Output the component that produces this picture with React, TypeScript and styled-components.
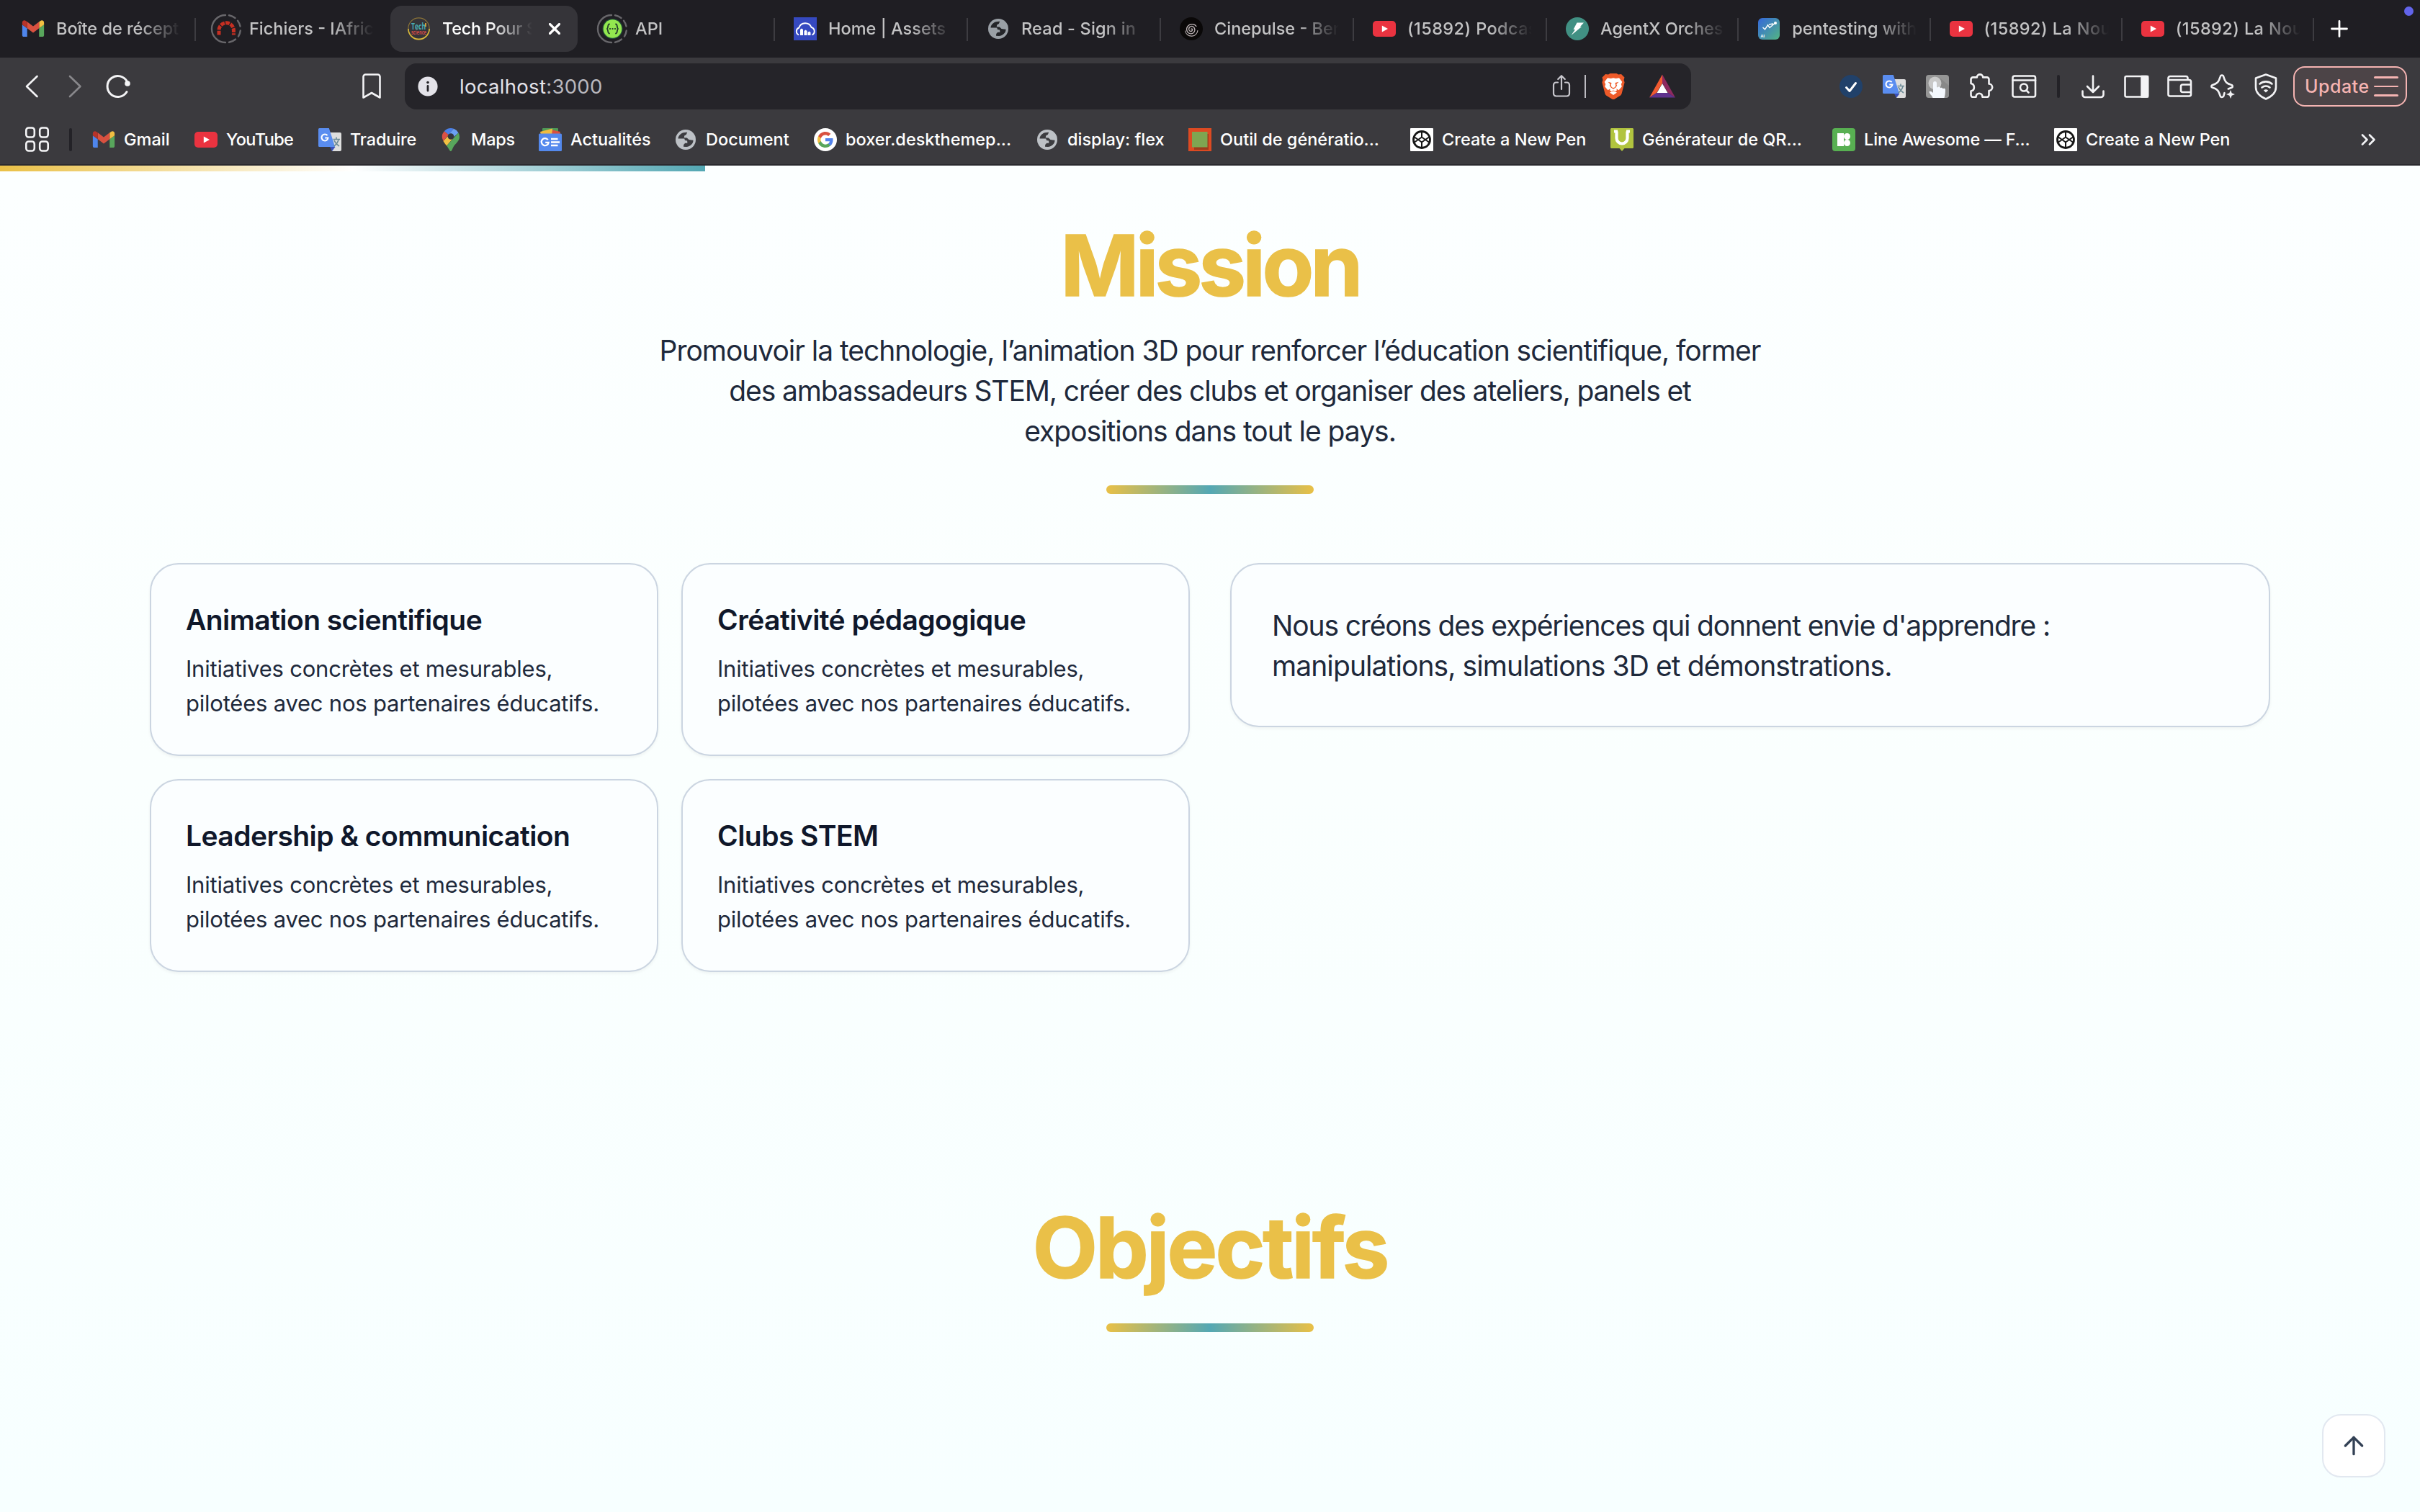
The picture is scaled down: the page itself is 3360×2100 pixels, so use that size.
import React from "react";
import styled, { createGlobalStyle } from "styled-components";
import { ArrowUp } from "lucide-react";

const GlobalStyle = createGlobalStyle`
  * { box-sizing: border-box; }
  body {
    margin: 0;
    background: #fbffff;
    font-family: Inter, "Liberation Sans", "Noto Sans CJK SC", sans-serif;
    -webkit-font-smoothing: antialiased;
  }
  h2, h3, p { margin: 0; }
`;

const Window = styled.div`
  width: 3360px;
  height: 2100px;
  display: flex;
  flex-direction: column;
  overflow: hidden;
`;

/* ---------- Tab strip ---------- */

const TabStrip = styled.div`
  position: relative;
  display: flex;
  flex: none;
  align-items: center;
  height: 80px;
  padding-left: 4px;
  background: #1f1e23;
`;

const TabSlot = styled.div<{ $width: number }>`
  display: flex;
  flex: none;
  align-items: center;
  width: ${(p) => p.$width}px;
  height: 80px;
`;

const TabBody = styled.div<{ $active?: boolean }>`
  display: flex;
  align-items: center;
  width: 260px;
  height: 64px;
  margin-left: 2px;
  padding-left: 24px;
  border-radius: 16px;
  background: ${(p) => (p.$active ? "#353439" : "transparent")};
`;

const TabLabel = styled.span<{ $active?: boolean; $tracking?: number }>`
  flex: none;
  width: ${(p) => (p.$active ? 125 : 173)}px;
  margin-left: 16px;
  white-space: nowrap;
  font-size: 23.5px;
  line-height: 32px;
  font-weight: ${(p) => (p.$active ? 500 : 450)};
  letter-spacing: ${(p) => p.$tracking ?? 0}px;
  color: ${(p) => (p.$active ? "#ffffff" : "#c3c3c4")};
  mask-image: linear-gradient(to right, #000 calc(100% - 58px), transparent 100%);
`;

const TabSeparator = styled.span`
  width: 2px;
  height: 32px;
  margin-left: auto;
  margin-top: 2px;
  background: #3d3c41;
`;

const CloseIcon = styled.svg`
  width: 16px;
  height: 16px;
  margin-left: 23px;
`;

const NewTab = styled.svg`
  width: 24px;
  height: 24px;
  margin-left: 23px;
`;

const RecordingDot = styled.span`
  position: absolute;
  top: 9px;
  right: 9px;
  width: 13px;
  height: 13px;
  border-radius: 50%;
  background: #6264ea;
`;

/* ---------- Toolbar ---------- */

const Toolbar = styled.div`
  display: flex;
  flex: none;
  align-items: center;
  height: 80px;
  padding-left: 30px;
  background: #3b3a3e;
`;

const Glyph = styled.svg`
  flex: none;
  display: block;
  width: 32px;
  height: 32px;
  overflow: visible;
  fill: none;
  stroke: #f3f3f5;
  stroke-width: 2.6;
  stroke-linecap: round;
  stroke-linejoin: round;
`;

const Navigation = styled.div`
  display: flex;
  align-items: center;
  gap: 26px;
  width: 470px;
`;

const AddressBar = styled.div`
  display: flex;
  align-items: center;
  width: 1786px;
  height: 64px;
  margin-left: 30px;
  padding: 0 24px 0 16px;
  border-radius: 16px;
  background: #252429;
`;

const Address = styled.span`
  flex: 1;
  margin-left: 28px;
  font-size: 27.5px;
  line-height: 40px;
  letter-spacing: 0.3px;
  color: #e4e3e9;
`;

const Port = styled.span`
  color: #b9b8be;
`;

const AddressDivider = styled.span`
  width: 2px;
  height: 32px;
  margin: 0 22px 0 16px;
  background: #bdbcc2;
`;

const IconGroup = styled.div<{ $before: number }>`
  display: flex;
  align-items: center;
  gap: 28px;
  margin-left: ${(p) => p.$before}px;
`;

const BarDivider = styled.span<{ $before: number; $after?: number }>`
  width: 4px;
  height: 32px;
  margin: 0 ${(p) => p.$after ?? 0}px 0 ${(p) => p.$before}px;
  border-radius: 2px;
  background: #232227;
`;

const UpdateButton = styled.button`
  display: flex;
  align-items: center;
  justify-content: space-between;
  width: 158px;
  height: 56px;
  margin: 0 0 0 22px;
  padding: 0 10px 0 14px;
  border: 2px solid #f5b4b2;
  border-radius: 16px;
  background: #4c4447;
  color: #f5b4b2;
  font: 500 25px/36px Inter, sans-serif;
  letter-spacing: 0.5px;
`;

const MenuLines = styled.span`
  display: flex;
  flex-direction: column;
  gap: 10px;
  width: 34px;
`;

const MenuLine = styled.span`
  height: 2.6px;
  border-radius: 2px;
  background: #f5b4b2;
`;

/* ---------- Bookmarks ---------- */

const BookmarksBar = styled.div`
  display: flex;
  flex: none;
  align-items: center;
  height: 70px;
  padding-left: 36px;
  border-bottom: 2px solid #2b2a2f;
  background: #3b3a3e;
`;

const Bookmark = styled.div<{ $width: number }>`
  display: flex;
  flex: none;
  align-items: center;
  gap: 12px;
  width: ${(p) => p.$width}px;
`;

const BookmarkLabel = styled.span<{ $tracking?: number }>`
  white-space: nowrap;
  font-size: 23.5px;
  line-height: 32px;
  font-weight: 500;
  letter-spacing: ${(p) => p.$tracking ?? 0}px;
  color: #ffffff;
`;

const Overflow = styled.svg`
  width: 22px;
  height: 16px;
  margin-left: auto;
  margin-right: 61px;
`;

/* ---------- Page ---------- */

const Page = styled.main`
  display: flex;
  flex: 1;
  flex-direction: column;
  align-items: center;
  background: linear-gradient(to bottom, #fcffff 0%, #fafffe 45%, #f7ffff 100%);
`;

const ScrollProgress = styled.div`
  align-self: flex-start;
  flex: none;
  width: 979px;
  height: 8px;
  background: linear-gradient(to right, #eac046, #ffffff 50%, #53a7b3);
`;

const SectionHeader = styled.header<{ $before: number }>`
  display: flex;
  flex-direction: column;
  align-items: center;
  padding-top: ${(p) => p.$before}px;
`;

const Heading = styled.h2<{ $tracking: number }>`
  font-size: 117px;
  line-height: 120px;
  font-weight: 700;
  letter-spacing: ${(p) => p.$tracking}px;
  color: #eac048;
  -webkit-text-stroke: 1.6px #eac048;
`;

const Lead = styled.p`
  display: flex;
  flex-direction: column;
  align-items: center;
  padding-top: 30px;
`;

const TextLine = styled.span<{ $tracking: number }>`
  display: block;
  white-space: nowrap;
  font-size: 39px;
  line-height: 56px;
  letter-spacing: ${(p) => p.$tracking}px;
  color: #1e293b;
`;

const Accent = styled.div<{ $before: number }>`
  width: 288px;
  height: 12px;
  margin-top: ${(p) => p.$before}px;
  border-radius: 6px;
  background: linear-gradient(to right, #e9c046, #54a8b4 50%, #e9c046);
`;

const Columns = styled.div`
  display: grid;
  grid-template-columns: 1fr 1fr;
  align-items: start;
  gap: 56px;
  width: 2944px;
  margin-top: 96px;
`;

const CardGrid = styled.div`
  display: grid;
  grid-template-columns: 1fr 1fr;
  gap: 32px;
`;

const Card = styled.article<{ $padding: number }>`
  padding: ${(p) => p.$padding + 1}px ${(p) => p.$padding}px ${(p) => p.$padding - 1}px;
  border: 2px solid #cbd5e1;
  border-radius: 40px;
  background: #fbfeff;
  box-shadow: 0 2px 4px rgba(0, 0, 0, 0.05);
`;

const CardTitle = styled.h3`
  font-size: 39px;
  line-height: 56px;
  font-weight: 600;
  letter-spacing: -0.56px;
  white-space: nowrap;
  color: #0f172a;
`;

const CardText = styled.p`
  width: 600px;
  margin-top: 16px;
  font-size: 31px;
  line-height: 48px;
  letter-spacing: -0.22px;
  color: #1e293b;
`;

const BackToTop = styled.button`
  position: fixed;
  right: 48px;
  bottom: 48px;
  display: flex;
  align-items: center;
  justify-content: center;
  width: 88px;
  height: 88px;
  padding: 0;
  border: 2px solid #e2e8f0;
  border-radius: 26px;
  background: #ffffff;
  color: #334155;
`;

/* ---------- Site icons ---------- */

const Favicon = styled.svg`
  flex: none;
  display: block;
  width: 32px;
  height: 32px;
  overflow: visible;
`;

const GmailIcon = () => (
  <Favicon viewBox="49.5 39.5 93 73">
    <path fill="#4f86ec" d="M58 108h14V74L52 59v43c0 3.32 2.69 6 6 6" />
    <path fill="#58a65c" d="M120 108h14c3.32 0 6-2.69 6-6V59l-20 15" />
    <path fill="#f1bf42" d="M120 48v26l20-15v-8c0-7.42-8.47-11.65-14.4-7.2" />
    <path fill="#d85140" d="M72 74V48l24 18 24-18v26L96 92" />
    <path fill="#b7332a" d="M52 51v8l20 15V48l-5.6-4.2c-5.94-4.45-14.4-.22-14.4 7.2" />
  </Favicon>
);

const YouTubeIcon = () => (
  <Favicon viewBox="0 0 32 32">
    <rect x="0" y="5" width="32" height="22" rx="5" fill="#ea3340" />
    <path d="M12.8 11.6v8.8l8.2-4.4z" fill="#fff" />
  </Favicon>
);

const TranslateIcon = () => (
  <Favicon viewBox="0 0 32 32">
    <path d="M15 6h15a2 2 0 0 1 2 2v22a2 2 0 0 1-2 2H19z" fill="#dedede" />
    <path d="M16 26h7.5L19 32z" fill="#3a4fb8" />
    <path d="M1.5 0H14.8l8.4 26H1.5A1.5 1.5 0 0 1 0 24.500V1.500A1.500 1.500 0 0 1 1.500 0z" fill="#5a8df0" />
    <g fill="none" stroke="#6d8b97" strokeWidth="1.6">
      <path d="M20.5 15.5h9.5M25 12.500v3M28 16c-1 4-3.500 7-6.500 9M22 17c1.500 3.500 4 6 7 8" />
    </g>
    <path d="M12.600 10.200A4.500 4.500 0 1 0 13.500 13.500H9.300" fill="none" stroke="#fff" strokeWidth="2" />
  </Favicon>
);

const MapsIcon = () => (
  <Favicon viewBox="0 0 32 32">
    <path d="M16 0a12 12 0 0 0-9.200 4.300L12.500 9 20 .8A12 12 0 0 0 16 0z" fill="#4a7fe8" />
    <path d="M20 .8 12.500 9 16 16l10.500-9.500A12 12 0 0 0 20 .8z" fill="#6ba0f2" />
    <path d="M6.800 4.300A12 12 0 0 0 5.500 18l7.500-8.800z" fill="#dc5044" />
    <path d="M5.500 18c1.200 2.300 2.800 4.200 4.600 6.400L20 13l-8-2z" fill="#f2c043" />
    <path d="M26.500 6.500 10.100 24.400C13 28 14.500 32 16 32s2.200-4.500 4.500-7.500C23.500 20.500 28 17.500 28 12a11 11 0 0 0-1.500-5.500z" fill="#58a65c" />
    <circle cx="16" cy="11.500" r="4.300" fill="#33363d" />
  </Favicon>
);

const NewsIcon = () => (
  <Favicon viewBox="0 0 32 32">
    <rect x="5" y="0" width="22" height="9" rx="1" fill="#4f9a56" />
    <path d="M2 5l17-4.500V9H3z" fill="#f0bb40" />
    <path d="M19 2.500l11 2.500-1 4H18z" fill="#d9503f" />
    <rect x="0" y="7.500" width="32" height="24.500" rx="1.500" fill="#5489ed" />
    <path d="M12.800 16.200A5 5 0 1 0 13.700 19.800H9.200" fill="none" stroke="#fff" strokeWidth="2.300" />
    <path d="M17 15h9.500M17 19.500h12M17 24h9.500" stroke="#fff" strokeWidth="2.600" />
  </Favicon>
);

const GlobeIcon = ({ tone, hole }: { tone: string; hole: string }) => (
  <Favicon viewBox="0 0 32 32">
    <circle cx="16" cy="16" r="14" fill={tone} />
    <path
      d="M5.500 14.500C6 9 11 5.500 18.200 5.800L16.800 9l-2.600 1.600-.4 2.600 4 .4 2.700 2.400 3.400.6 2.600.2c.3 4.200-3.800 9-9.700 9.200l-3.800-.2.2-2.800 2-2.200h3.200l-.3-3.200-3.100-.6-.8-2.500z"
      fill={hole}
    />
  </Favicon>
);

const GoogleIcon = () => (
  <Favicon viewBox="0 0 32 32">
    <circle cx="16" cy="16" r="16" fill="#fff" />
    <g transform="translate(4 4)">
      <path fill="#5383ec" d="M22.560 12.250c0-.780-.070-1.530-.200-2.250H12v4.260h5.920c-.260 1.370-1.040 2.530-2.210 3.310v2.770h3.570c2.080-1.920 3.280-4.740 3.280-8.090z" />
      <path fill="#58a65c" d="M12 23c2.970 0 5.460-.980 7.280-2.660l-3.570-2.770c-.980.660-2.230 1.060-3.710 1.060-2.860 0-5.290-1.930-6.160-4.530H2.180v2.840C3.990 20.530 7.700 23 12 23z" />
      <path fill="#f1bd42" d="M5.840 14.090c-.220-.660-.350-1.360-.350-2.090s.130-1.430.350-2.090V7.070H2.180C1.430 8.550 1 10.220 1 12s.430 3.450 1.180 4.930z" />
      <path fill="#d85140" d="M12 5.380c1.620 0 3.060.560 4.210 1.640l3.150-3.150C17.450 2.090 14.970 1 12 1 7.700 1 3.990 3.470 2.180 7.070l3.660 2.840C6.710 7.310 9.140 5.380 12 5.380z" />
    </g>
  </Favicon>
);

const FlexToolIcon = () => (
  <Favicon viewBox="0 0 32 32">
    <rect width="32" height="32" fill="#dd4a22" />
    <path d="M8 8h20v22H8z" fill="#9c3d1c" />
    <rect x="5" y="5" width="21.5" height="21.5" fill="#7fa551" />
  </Favicon>
);

const CodePenIcon = () => (
  <Favicon viewBox="0 0 32 32">
    <rect width="32" height="32" rx="1" fill="#fff" />
    <g fill="none" stroke="#161616" strokeWidth="2" strokeLinejoin="round">
      <circle cx="16" cy="16" r="11.5" strokeWidth="2.8" />
      <path d="M6 12.500 16 19.500l10-7M6 19.500 16 12.500l10 7M16 4.500v8M16 19.500v8" />
    </g>
  </Favicon>
);

const QrIcon = () => (
  <Favicon viewBox="0 0 32 32">
    <path d="M1 0h30l1 1v26l-1 1H19.500L16 32l-3.500-4H1l-1-1V1z" fill="#b1c43f" />
    <path d="M8.500 4.500v9.500a7.500 7.500 0 0 0 15 0V4.500M5 4.500h5M22 4.500h5" fill="none" stroke="#fff" strokeWidth="4.200" />
  </Favicon>
);

const Icons8Icon = () => (
  <Favicon viewBox="0 0 32 32">
    <rect width="32" height="32" rx="4" fill="#58b052" />
    <path d="M7 7h9v18H7z" fill="#fff" />
    <circle cx="20.5" cy="11.5" r="4.5" fill="#fff" />
    <circle cx="20.5" cy="20.5" r="4.5" fill="#fff" />
  </Favicon>
);

const LoadingRing = () => (
  <g fill="none" stroke="#68676b" strokeWidth="2.4" strokeLinecap="round">
    <path d="M15 35A19 19 0 0 1 15-3" />
    <path d="M20-2.800A19 19 0 0 1 28.500 1" />
    <path d="M32 4.800A19 19 0 0 1 35.500 12.500" />
    <path d="M35.800 18.500A19 19 0 0 1 33 26.500" />
    <path d="M29 30.500A19 19 0 0 1 20 34.800" />
  </g>
);

const FilesIcon = () => (
  <Favicon viewBox="0 0 32 32">
    <LoadingRing />
    <path d="M6 24.500V18A10.200 10.200 0 0 1 26.400 18v6.500" fill="none" stroke="#c62f22" strokeWidth="5" strokeDasharray="5.800 1.300" />
  </Favicon>
);

const SwaggerIcon = () => (
  <Favicon viewBox="0 0 32 32">
    <LoadingRing />
    <circle cx="16.5" cy="16" r="14" fill="#24543a" />
    <circle cx="16.5" cy="16" r="12.8" fill="#93e84f" />
    <g fill="none" stroke="#243d2b" strokeWidth="1.8" strokeLinecap="round">
      <path d="M12 9.500c-2.600 0-1.200 4.500-3 6.500 1.800 2 .4 6.500 3 6.500M21 9.500c2.600 0 1.200 4.500 3 6.500-1.800 2-.4 6.500-3 6.500" />
      <path d="M13 16h.1M16.500 16h.1M20 16h.1" strokeWidth="2.200" />
    </g>
  </Favicon>
);

const LogoWord = styled.text`
  font-family: "Open Sans", sans-serif;
  font-weight: 700;
`;

const TechScienceIcon = () => (
  <Favicon viewBox="0 0 32 32">
    <circle cx="15.5" cy="15.5" r="14.6" fill="none" stroke="#8b7338" strokeWidth="1.2" />
    <path d="M.9 16A14.600 14.600 0 0 0 30.100 16" fill="none" stroke="#d9b83b" strokeWidth="1.6" />
    <LogoWord x="5" y="16.8" fontSize="12" textLength="20" lengthAdjust="spacingAndGlyphs" fill="#49adb3">Tech</LogoWord>
    <path d="M25 8v5" stroke="#dfa83a" strokeWidth="1.8" />
    <LogoWord x="5" y="23.8" fontSize="8.8" textLength="21" lengthAdjust="spacingAndGlyphs" fill="#cf4b45">science</LogoWord>
  </Favicon>
);

const AssetsIcon = () => (
  <Favicon viewBox="0 0 32 32">
    <rect width="32" height="32" fill="#3549c0" />
    <path d="M7 24.500a5.400 5.400 0 0 1 .3-10A9.200 9.200 0 0 1 24.500 14a5.600 5.600 0 0 1 1 10.500" fill="none" stroke="#fff" strokeWidth="1.900" />
    <path d="M9 17l2-1.500 2 1.500v8H9zM14.500 19l2-1.500 2 1.500v6h-4zM19.500 21l2-1.500 2 1.500v4h-4z" fill="#fff" />
  </Favicon>
);

const SpiralIcon = () => (
  <Favicon viewBox="0 0 32 32">
    <circle cx="16" cy="16" r="16" fill="#0a0808" />
    <path
      d="M16 16.500c.8-1.200 2.400.2 1.300 1.900-1.500 2.300-5 .8-4.700-2.300.3-3.900 5.600-4.900 7.500-1.400 2.200 4-.8 8.500-5 8.200-5-.4-7-6.300-4.200-10.200 3-4.200 9.600-4 12-.2"
      fill="none"
      stroke="#b7aeb0"
      strokeWidth="1.4"
      strokeLinecap="round"
    />
    <path d="M7.500 18.500c.8 4.800 4.600 8 9.500 7.600 4.400-.4 7.600-3.800 8-8" fill="none" stroke="#b7aeb0" strokeWidth="1.1" />
  </Favicon>
);

const AgentIcon = () => (
  <Favicon viewBox="0 0 32 32">
    <circle cx="16" cy="16" r="16" fill="#419083" />
    <path d="M15.500 7.500H25l-5 5.500h2L7.500 25 13 17h-2.500z" fill="#fff" />
  </Favicon>
);

const PentestIcon = () => (
  <Favicon viewBox="0 0 32 32">
    <defs>
      <linearGradient id="pentest" x1="0" y1="0" x2="1" y2="1">
        <stop offset="0" stopColor="#3468dc" />
        <stop offset="1" stopColor="#53b583" />
      </linearGradient>
    </defs>
    <rect x="1" y="1" width="30" height="30" rx="6" fill="url(#pentest)" />
    <path d="M7.500 14l3 3 4.500-7M15 11.500l2 3 7-6M16 10l6-1" fill="none" stroke="#fff" strokeWidth="1.400" />
    <circle cx="25" cy="8" r="2" fill="#fff" />
    <LogoWord x="4.5" y="27.5" fontSize="5.5" fill="#fff">AI</LogoWord>
  </Favicon>
);

const BraveIcon = () => (
  <Favicon viewBox="0 0 32 32">
    <path
      d="M9-.5 11.500-2h9L23-.5l4-.5 4.500 4.500L30.600 7l1 3.500-4 15.500c-.3 1.200-1 2-2 2.700l-7.600 4.700c-1.300.9-2.700.9-4 0L6.400 28.700c-1-.7-1.700-1.500-2-2.700L.4 10.500l1-3.500L.5 3.500 5-1z"
      fill="#ee5a29"
    />
    <path
      d="M8 4.200l4.500.8L16 4.300l3.500.7 4.500-.8 4.300 5.500-1.500 3.300 1 3.200-4.300 5-3.200-2 .6 2.300L16 25l-4.900-3.500.6-2.300-3.200 2-4.300-5 1-3.200-1.500-3.300z"
      fill="#fff"
    />
    <path
      d="M8.500 9.800l5 1.200-.8 3.700 1.200 2.500L16 18l2.100-.8 1.200-2.500-.8-3.700 5-1.200-3.300 3.200 1 1.800-2 3L16 19.800l-3.200-2-2-3 1-1.800zM12.800 23.300L16 21.600l3.200 1.700L16 25z"
      fill="#ee5a29"
    />
    <path d="M11 24.500l5-2 5 2-5 3.500z" fill="#fff" />
  </Favicon>
);

const BatIcon = () => (
  <Favicon viewBox="2 0.500 32 32">
    <path d="M18 0 0 32l10-6.500L18 12z" fill="#f15a30" />
    <path d="M18 0l18 32-10-6.500L18 12z" fill="#8e2a60" />
    <path d="M0 32h36l-10-6.500H10z" fill="#5f328c" />
    <path d="M18 12.500 10.500 25.500h15z" fill="#fff" />
  </Favicon>
);

const CheckBadgeIcon = () => (
  <Favicon viewBox="0 0 32 32">
    <circle cx="16" cy="16" r="16" fill="#21416a" />
    <path d="M9.500 17.500l4.500 5 8.500-11" fill="none" stroke="#fff" strokeWidth="3" strokeLinecap="round" strokeLinejoin="round" />
  </Favicon>
);

const HandIcon = () => (
  <Favicon viewBox="0 0 32 32">
    <rect width="32" height="32" rx="4" fill="#959595" />
    <path d="M18 3l14 12v14l-8 3z" fill="#888" />
    <circle cx="12.5" cy="11.5" r="9" fill="#c9c9c9" />
    <path
      d="M10 11.500c0-3.300 5-3.300 5 0V17l1.500.5c.5-1.500 3.500-1.200 3.500.8 1-1 3.500-.6 3.500 1.200 1-1.200 3.500-.7 3.500 1.200 0 4-.5 8-1.500 11.300H9.500C8 28 5 26.500 4.500 23.500c.5-1.500 3-1 5.500 1.500z"
      fill="#f4f8fe"
    />
  </Favicon>
);

/* ---------- Data ---------- */

type TabData = {
  title: string;
  icon: React.ReactNode;
  width: number;
  active?: boolean;
  separated?: boolean;
  tracking?: number;
};

const tabs: TabData[] = [
  { title: "Boîte de récept", icon: <GmailIcon />, width: 268, separated: true },
  { title: "Fichiers - IAfric", icon: <FilesIcon />, width: 268 },
  { title: "Tech Pour S", icon: <TechScienceIcon />, width: 268, active: true, tracking: -0.3 },
  { title: "API", icon: <SwaggerIcon />, width: 268, separated: true },
  { title: "Home | Assets", icon: <AssetsIcon />, width: 268, separated: true },
  { title: "Read - Sign in", icon: <GlobeIcon tone="#9aa0a6" hole="#242529" />, width: 268, separated: true, tracking: 0.2 },
  { title: "Cinepulse - Ber", icon: <SpiralIcon />, width: 268, separated: true },
  { title: "(15892) Podcas", icon: <YouTubeIcon />, width: 268, separated: true, tracking: 0.4 },
  { title: "AgentX Orches", icon: <AgentIcon />, width: 266.25, separated: true },
  { title: "pentesting with", icon: <PentestIcon />, width: 266.25, separated: true },
  { title: "(15892) La Nou", icon: <YouTubeIcon />, width: 266.25, separated: true, tracking: 0.4 },
  { title: "(15892) La Nou", icon: <YouTubeIcon />, width: 266.25, separated: true, tracking: 0.4 },
];

const bookmarkGlobe = <GlobeIcon tone="#bdc1c6" hole="#3c3c40" />;

const bookmarks = [
  { label: "Gmail", icon: <GmailIcon />, width: 142 },
  { label: "YouTube", icon: <YouTubeIcon />, width: 172, tracking: -0.6 },
  { label: "Traduire", icon: <TranslateIcon />, width: 168, tracking: -0.15 },
  { label: "Maps", icon: <MapsIcon />, width: 138, tracking: -0.3 },
  { label: "Actualités", icon: <NewsIcon />, width: 188 },
  { label: "Document", icon: bookmarkGlobe, width: 194 },
  { label: "boxer.deskthemep...", icon: <GoogleIcon />, width: 308 },
  { label: "display: flex", icon: bookmarkGlobe, width: 212 },
  { label: "Outil de génératio...", icon: <FlexToolIcon />, width: 308 },
  { label: "Create a New Pen", icon: <CodePenIcon />, width: 278 },
  { label: "Générateur de QR...", icon: <QrIcon />, width: 308 },
  { label: "Line Awesome — F...", icon: <Icons8Icon />, width: 308, tracking: -0.15 },
  { label: "Create a New Pen", icon: <CodePenIcon />, width: 260 },
];

const initiatives = ["Animation scientifique", "Créativité pédagogique", "Leadership & communication", "Clubs STEM"];

/* ---------- Parts ---------- */

const Tab = ({ title, icon, width, active, separated, tracking }: TabData) => (
  <TabSlot $width={width}>
    <TabBody $active={active}>
      {icon}
      <TabLabel $active={active} $tracking={tracking}>{title}</TabLabel>
      {active && (
        <CloseIcon viewBox="0 0 16 16">
          <path d="M1.500 1.500l13 13M14.500 1.500l-13 13" stroke="#fff" strokeWidth="3.200" strokeLinecap="round" />
        </CloseIcon>
      )}
    </TabBody>
    {separated && <TabSeparator />}
  </TabSlot>
);

const BrowserToolbar = () => (
  <Toolbar>
    <Navigation>
      <Glyph viewBox="0 0 32 32"><path d="M21.500 2 7 16l14.500 14" /></Glyph>
      <Glyph viewBox="0 0 32 32" opacity="0.42"><path d="M9 2l14.500 14L9 30" /></Glyph>
      <Glyph viewBox="-1 0 32 32">
        <path d="M29 23.500A14.500 14.500 0 1 1 29.500 9.500" strokeWidth="3" />
        <circle cx="30" cy="12" r="3.800" fill="#f3f3f5" stroke="none" />
      </Glyph>
    </Navigation>
    <Glyph viewBox="0 0 32 32">
      <path d="M4.500 2.500a3 3 0 0 1 3-3h17a3 3 0 0 1 3 3v29L16 25 4.500 31.500z" />
    </Glyph>
    <AddressBar>
      <Glyph viewBox="0 0 32 32">
        <circle cx="16" cy="16" r="13.600" fill="#e4e3e9" stroke="none" />
        <path d="M16 15.500v6.500" stroke="#252429" strokeWidth="2.800" />
        <circle cx="16" cy="10.500" r="1.800" fill="#252429" stroke="none" />
      </Glyph>
      <Address>
        localhost<Port>:3000</Port>
      </Address>
      <Glyph viewBox="0 0 32 32">
        <g stroke="#c9c8ce" strokeWidth="2.200">
          <path d="M11 10.500H8.500a3.500 3.500 0 0 0-3.500 3.500v12a3.500 3.500 0 0 0 3.500 3.500h15a3.500 3.500 0 0 0 3.500-3.500V14a3.500 3.500 0 0 0-3.500-3.500H21M16 20V1.500M11.200 6 16 1.200 20.800 6" />
        </g>
      </Glyph>
      <AddressDivider />
      <BraveIcon />
      <IconGroup $before={36}>
        <BatIcon />
      </IconGroup>
    </AddressBar>
    <IconGroup $before={206}>
      <CheckBadgeIcon />
      <TranslateIcon />
      <HandIcon />
      <Glyph viewBox="0 0 32 32">
        <path d="M2.500 6.200a2.800 2.800 0 0 1 2.800-2.800h5.500c0-5.400 8.400-5.400 8.400 0h5.500a2.800 2.800 0 0 1 2.800 2.800v6.300c6.200 0 6.200 9.500 0 9.500v6a2.800 2.800 0 0 1-2.800 2.800h-6.200c0-6.800-9-6.800-9 0H5.300A2.800 2.800 0 0 1 2.500 28v-5.500c5.800-1 5.800-9.500 0-10.500z" />
      </Glyph>
      <Glyph viewBox="0 0 32 32">
        <rect x="0.5" y="1.5" width="31.5" height="29" rx="2.5" />
        <path d="M.5 7.500H32" />
        <circle cx="16" cy="17.500" r="5" />
        <path d="M19.500 21.500l3 3" />
      </Glyph>
    </IconGroup>
    <BarDivider $before={30} />
    <IconGroup $before={30}>
      <Glyph viewBox="0 0 32 32">
        <path d="M16 1.500V24M8 16l8 8 8-8M1.500 22.500v5a3.500 3.500 0 0 0 3.500 3.500h22a3.500 3.500 0 0 0 3.500-3.500v-5" />
      </Glyph>
      <Glyph viewBox="0 0 32 32">
        <rect x="0.5" y="2" width="31.5" height="28.5" rx="2" />
        <path d="M23.500 2H32v28.500h-8.500z" fill="#f3f3f5" />
      </Glyph>
      <Glyph viewBox="0 0 32 32">
        <path d="M27.500 7V4.500a2.500 2.500 0 0 0-2.500-2.500H3A2.500 2.500 0 0 0 .5 4.500V27A2.500 2.500 0 0 0 3 29.500h26.500A2.500 2.500 0 0 0 32 27V9.500A2.500 2.500 0 0 0 29.500 7H.5M32 13.500H20.500A2.500 2.500 0 0 0 18 16v5.500a2.500 2.500 0 0 0 2.500 2.500H32" />
      </Glyph>
      <Glyph viewBox="0 0 32 32">
        <path d="M15 .5c1.200 0 2 .8 2.300 2 1.500 5.600 3.300 8.300 6 9.500 1.800 1 4 1.500 5.500 2.200 1.300.8 1.300 2.700 0 3.300l-5 2M15 .5c-1.200 0-2 .8-2.300 2C10.500 10 8.500 12 1.500 14.200c-1.500.8-1.500 2.700 0 3.300C8.500 19.500 10.500 22 12.700 29.500c.8 2 3.300 2 4.600 0l1.200-4.300" />
        <path d="M27 21l1.700 4.300L33 27l-4.300 1.700L27 33l-1.700-4.300L21 27l4.300-1.700z" fill="#f3f3f5" stroke="none" />
      </Glyph>
      <Glyph viewBox="0 0 32 32">
        <path d="M16-.5l14 5V17c0 8-6 13-14 16.500C8 30 2 25 2 17V4.500z" />
        <path d="M7.500 12.500a13 13 0 0 1 17 0M10.500 17.500a8.500 8.500 0 0 1 11 0" />
        <path d="M12.800 21.500a5 5 0 0 1 6.400 0L16 24.500z" fill="#f3f3f5" stroke="none" />
      </Glyph>
    </IconGroup>
    <UpdateButton>
      Update
      <MenuLines>
        <MenuLine />
        <MenuLine />
        <MenuLine />
      </MenuLines>
    </UpdateButton>
  </Toolbar>
);

export default function App() {
  return (
    <>
      <GlobalStyle />
      <Window>
        <TabStrip>
          {tabs.map((tab, i) => (
            <Tab key={i} {...tab} />
          ))}
          <NewTab viewBox="0 0 24 24">
            <path d="M12 1.500v21M1.500 12h21" stroke="#fff" strokeWidth="2.800" strokeLinecap="round" />
          </NewTab>
          <RecordingDot />
        </TabStrip>

        <BrowserToolbar />

        <BookmarksBar>
          <Glyph viewBox="0 0 32 32">
            <rect x="0.3" y="-0.5" width="11.5" height="13" rx="3.5" />
            <rect x="19.2" y="-0.5" width="11.5" height="13" rx="3.5" />
            <rect x="0.3" y="18.5" width="11.5" height="13" rx="3.5" />
            <rect x="19.2" y="18.5" width="11.5" height="13" rx="3.5" />
          </Glyph>
          <BarDivider $before={28} $after={28} />
          {bookmarks.map((b, i) => (
            <Bookmark key={i} $width={b.width}>
              {b.icon}
              <BookmarkLabel $tracking={b.tracking}>{b.label}</BookmarkLabel>
            </Bookmark>
          ))}
          <Overflow viewBox="0 0 22 16" fill="none" stroke="#f3f3f5" strokeWidth="2.6" strokeLinecap="round" strokeLinejoin="round">
            <path d="M3 1.500 9.500 8 3 14.500M13 1.500 19.500 8 13 14.500" />
          </Overflow>
        </BookmarksBar>

        <Page>
          <ScrollProgress />
          <SectionHeader $before={71}>
            <Heading $tracking={-4.7}>Mission</Heading>
            <Lead>
              <TextLine $tracking={-1.04}>
                Promouvoir la technologie, l’animation 3D pour renforcer l’éducation scientifique, former
              </TextLine>
              <TextLine $tracking={-1.13}>
                des ambassadeurs STEM, créer des clubs et organiser des ateliers, panels et
              </TextLine>
              <TextLine $tracking={-1.01}>expositions dans tout le pays.</TextLine>
            </Lead>
            <Accent $before={47} />
          </SectionHeader>

          <Columns>
            <CardGrid>
              {initiatives.map((title) => (
                <Card key={title} $padding={48}>
                  <CardTitle>{title}</CardTitle>
                  <CardText>Initiatives concrètes et mesurables, pilotées avec nos partenaires éducatifs.</CardText>
                </Card>
              ))}
            </CardGrid>
            <Card $padding={56}>
              <TextLine $tracking={-1.15}>Nous créons des expériences qui donnent envie d'apprendre :</TextLine>
              <TextLine $tracking={-0.91}>manipulations, simulations 3D et démonstrations.</TextLine>
            </Card>
          </Columns>

          <SectionHeader $before={323}>
            <Heading $tracking={-2.9}>Objectifs</Heading>
            <Accent $before={45} />
          </SectionHeader>
        </Page>

        <BackToTop aria-label="Haut de page">
          <ArrowUp size={40} strokeWidth={2} />
        </BackToTop>
      </Window>
    </>
  );
}
